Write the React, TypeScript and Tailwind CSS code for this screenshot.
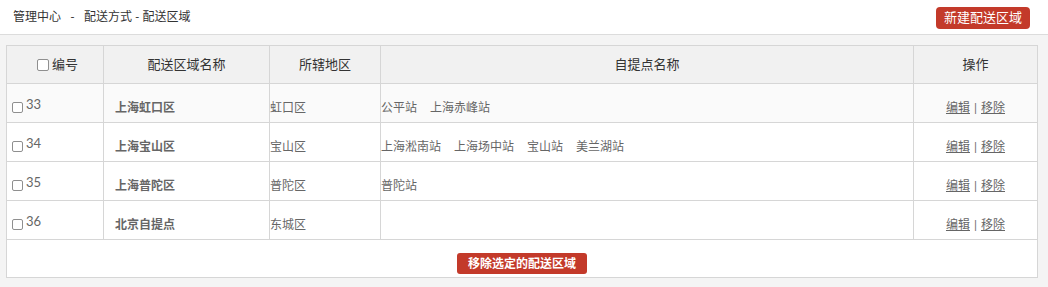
import React from "react";

const rows = [
  { id: 33, name: "上海虹口区", area: "虹口区", points: ["公平站", "上海赤峰站"], bg: "bg-[#fafafa]" },
  { id: 34, name: "上海宝山区", area: "宝山区", points: ["上海淞南站", "上海场中站", "宝山站", "美兰湖站"], bg: "bg-white" },
  { id: 35, name: "上海普陀区", area: "普陀区", points: ["普陀站"], bg: "bg-white" },
  { id: 36, name: "北京自提点", area: "东城区", points: [], bg: "bg-white" },
];

function Box() {
  return <span className="inline-block w-[11px] h-[11px] border border-[#8f8f8f] rounded-[2px] bg-white shrink-0" />;
}

export default function App() {
  return (
    <div className="w-[1048px] h-[287px] bg-[#f4f4f4] text-[12px] text-[#666] font-['Lato','Noto_Sans_CJK_SC',sans-serif]">
      <div className="h-[35px] bg-white border-b border-[#dcdcdc] flex items-center justify-between pl-[13px] pr-[18px]">
        <div className="text-[#333] whitespace-pre">管理中心   -   配送方式 - 配送区域</div>
        <button className="h-[22px] w-[94px] rounded-[4px] bg-[#c33a2a] text-white text-[13px] mt-[1px]">新建配送区域</button>
      </div>
      <div className="pt-[10px] pl-[6px]">
        <div className="w-[1032px] border border-[#d6d6d6] bg-white">
          <div className="grid grid-cols-[97px_166px_111px_533px_123px] h-[38px] bg-[#f1f1f1] text-[#333] text-[13px] border-b border-[#d6d6d6]">
            <div className="flex items-center justify-center gap-[3px] pl-[5px] border-r border-[#d6d6d6]">
              <span className="inline-block w-[12px] h-[12px] border border-[#8f8f8f] rounded-[2px] bg-white shrink-0" />
              <span>编号</span>
            </div>
            <div className="flex items-center justify-center border-r border-[#d6d6d6]">配送区域名称</div>
            <div className="flex items-center justify-center border-r border-[#d6d6d6]">所辖地区</div>
            <div className="flex items-center justify-center border-r border-[#d6d6d6]">自提点名称</div>
            <div className="flex items-center justify-center">操作</div>
          </div>
          {rows.map((r) => (
            <div key={r.id} className={`grid grid-cols-[97px_166px_111px_533px_123px] h-[39px] border-b border-[#d6d6d6] ${r.bg}`}>
              <div className="flex items-center pl-[5px] pt-[9px] border-r border-[#d6d6d6]">
                <Box />
                <span className="ml-[3px] -mt-[6px] text-[13px]">{r.id}</span>
              </div>
              <div className="flex items-center pl-[11px] pt-[10px] font-bold border-r border-[#d6d6d6]">{r.name}</div>
              <div className="flex items-center pt-[10px] border-r border-[#d6d6d6]">{r.area}</div>
              <div className="flex items-center pt-[10px] gap-[13px] border-r border-[#d6d6d6]">
                {r.points.map((p) => (
                  <span key={p}>{p}</span>
                ))}
              </div>
              <div className="flex items-center justify-center pt-[10px]">
                <a className="underline">编辑</a>
                <span className="mx-[4px]">|</span>
                <a className="underline">移除</a>
              </div>
            </div>
          ))}
          <div className="h-[37px] flex items-center justify-center pt-[10px]">
            <button className="h-[21px] w-[130px] rounded-[3px] bg-[#c33a2a] text-white font-bold text-[12px]">移除选定的配送区域</button>
          </div>
        </div>
      </div>
    </div>
  );
}
